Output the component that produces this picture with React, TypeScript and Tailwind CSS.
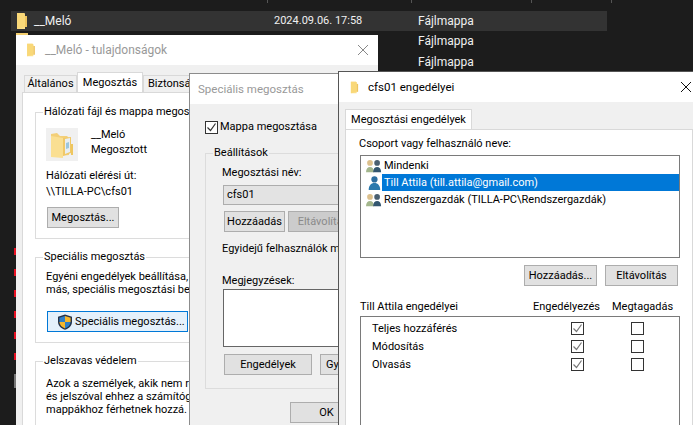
// App.tsx
import React from 'react';

const FolderFlat = ({ className }: { className?: string }) => (
  <svg viewBox="0 0 12 18" className={className}>
    <path d="M1 1h7l1 1v15H1z" fill="#fce08c" />
    <path d="M1 1h7l1 1v13l-8 2z" fill="#f9d878" />
    <path d="M9 4h2v11H9z" fill="#eec45e" />
  </svg>
);

const FolderShared = () => (
  <svg viewBox="0 0 32 33" className="h-[33px] w-[32px] bg-[#f0f0f0]">
    <path d="M5 6l6-1 3 3 7 0 2 2v17l-18 2z" fill="#f3cf78" />
    <path d="M5 8l12 2v20l-12-1z" fill="#fadf92" />
    <path d="M17 10l8-1v16l-8 3z" fill="#f0c868" />
    <path d="M19 11l5-1v14l-5 2z" fill="#e8eef2" />
    <path d="M20 15l3-1v6l-3 1z" fill="#9cc6de" />
    <path d="M25 16h2v11h-2z" fill="#eec65f" />
  </svg>
);

const Shield = () => (
  <svg viewBox="0 0 16 16" className="h-4 w-4 shrink-0">
    <path d="M8 0.5l7 2.2v5c0 4-3 6.800-7 8-4-1.200-7-4-7-8v-5z" fill="#26334a" />
    <path d="M8 2l5.600 1.700V8H8z" fill="#f6b72c" />
    <path d="M8 2v6H2.400V3.700z" fill="#2f7fc8" />
    <path d="M2.400 8H8v6.400C4.800 13.300 2.600 11 2.400 8z" fill="#f6b72c" />
    <path d="M8 8h5.600c-.2 3-2.400 5.300-5.600 6.400z" fill="#2f7fc8" />
  </svg>
);

const Person = ({ x, fill, shade }: { x: number; fill: string; shade: string }) => (
  <g transform={`translate(${x} 0)`}>
    <circle cx="4.500" cy="4.500" r="3.200" fill={fill} />
    <path d="M0 15c0-4 2-6 4.500-6s4.500 2 4.500 6z" fill={shade} />
  </g>
);

const Users = () => (
  <svg viewBox="0 0 18 16" className="h-4 w-4 shrink-0">
    <Person x={0} fill="#dcc08c" shade="#a3b68c" />
    <Person x={8} fill="#4a5f70" shade="#33566f" />
  </svg>
);

const User = () => (
  <svg viewBox="0 0 18 16" className="h-4 w-4 shrink-0">
    <circle cx="9.500" cy="4" r="3.500" fill="#2c6ea0" />
    <path d="M3 16c0-5 2.500-8 6.500-8s6.500 3 6.500 8z" fill="#2b79ad" />
  </svg>
);

const Btn = ({ className, children }: { className: string; children: React.ReactNode }) => (
  <div className={`flex h-[21px] shrink-0 items-center justify-center border border-[#adadad] bg-[#e1e1e1] ${className}`}>
    {children}
  </div>
);

const Group = ({ title, className, inner, children }: { title: string; className: string; inner: string; children: React.ReactNode }) => (
  <fieldset className={`border border-[#dcdcdc] ${className}`}>
    <legend className="ml-[7px] px-[1px] leading-[14px]">{title}</legend>
    <div className={inner}>{children}</div>
  </fieldset>
);

const Check = ({ on, dark }: { on?: boolean; dark?: boolean }) => (
  <div className="flex h-[13px] w-[13px] items-center justify-center border border-[#333] bg-white">
    {on && (
      <svg viewBox="0 0 11 11" className="h-[11px] w-[11px]">
        <path d="M1.500 5.500l3 3 5-7" fill="none" stroke={dark ? '#333' : '#777'} strokeWidth="1.200" />
      </svg>
    )}
  </div>
);

const permissions = ['Teljes hozzáférés', 'Módosítás', 'Olvasás'];

export default function App() {
  return (
    <div className="relative h-[425px] w-[693px] overflow-hidden whitespace-nowrap bg-[#1c1c1c] font-['Roboto',sans-serif] text-[11px] leading-[14px] text-black">
      {/* fájllista a háttérben */}
      <div className="flex h-[3px]">
        <div className="ml-[267px] w-[1px] bg-[#555]" />
        <div className="ml-[143px] w-[1px] bg-[#555]" />
        <div className="ml-[119px] w-[1px] bg-[#555]" />
        <div className="ml-[79px] w-[1px] bg-[#555]" />
      </div>
      <div className="ml-[11px] mt-[8px] flex h-[20px] w-[596px] items-center bg-[#333333] text-[#f0f0f0]">
        <FolderFlat className="ml-[5px] h-[18px] w-[12px]" />
        <span className="ml-[6px] w-[240px] text-[12px]">__Meló</span>
        <span className="w-[144px]">2024.09.06. 17:58</span>
        <span className="text-[12px]">Fájlmappa</span>
      </div>
      <div className="ml-[418px] mt-[3px] flex flex-col gap-[7px] text-[12px] text-[#f0f0f0]">
        <span>Fájlmappa</span>
        <span>Fájlmappa</span>
      </div>
      <div className="absolute left-[16px] top-[33px] h-[2px] w-[12px] bg-[#f4cf6e]" />

      {/* piros jelek a bal szélen */}
      <div className="absolute left-[14px] top-[248px] flex flex-col gap-[14px]">
        {[0, 1, 2, 3, 4, 5].map((i) => (
          <div key={i} className="h-[7px] w-[2px] bg-[#e81123]" />
        ))}
        <div className="h-[14px] w-[2px] bg-[#777]" />
      </div>

      {/* tulajdonságok ablak */}
      <div className="absolute left-[16px] top-[35px] flex h-[420px] w-[362px] flex-col bg-[#f0f0f0]">
        <div className="flex h-[30px] shrink-0 items-center bg-white text-[#999]">
          <FolderFlat className="ml-[10px] h-[14px] w-[10px]" />
          <span className="ml-[9px] text-[12px]">__Meló - tulajdonságok</span>
          <svg viewBox="0 0 10 10" className="ml-auto mr-[10px] h-[10px] w-[10px]">
            <path d="M0 0l10 10M10 0L0 10" stroke="#888" strokeWidth="1" />
          </svg>
        </div>
        <div className="ml-[8px] mt-[10px] flex h-[17px] items-end">
          <div className="flex h-[17px] w-[53px] items-center justify-center border border-b-0 border-[#d9d9d9]">Általános</div>
          <div className="-mt-[3px] flex h-[20px] w-[66px] items-center justify-center self-end border border-b-0 border-[#d9d9d9] bg-white">Megosztás</div>
          <div className="flex h-[17px] w-[60px] items-center border border-b-0 border-[#d9d9d9] pl-[4px]">Biztonság</div>
        </div>
        <div className="ml-[6px] flex w-[350px] flex-1 flex-col border border-[#d9d9d9] bg-white pl-[12px] pt-[12px]">
          <Group title="Hálózati fájl és mappa megoszt" className="h-[134px] w-[300px]" inner="pl-[10px]">
            <div className="mt-[9px] flex">
              <FolderShared />
              <div className="ml-[13px] flex flex-col gap-[1px]">
                <span>__Meló</span>
                <span>Megosztott</span>
              </div>
            </div>
            <div className="mt-[8px]">Hálózati elérési út:</div>
            <div className="mt-[2px]">\\TILLA-PC\cfs01</div>
            <Btn className="ml-[1px] mt-[8px] w-[72px]">Megosztás...</Btn>
          </Group>
          <Group title="Speciális megosztás" className="mt-[11px] h-[93px] w-[300px]" inner="pl-[10px]">
            <div className="mt-[6px]">Egyéni engedélyek beállítása,</div>
            <div className="-mt-[1px]">más, speciális megosztási beáll</div>
            <div className="ml-[1px] mt-[14px] flex h-[21px] w-[141px] items-center border border-[#0078d7] bg-[#e5f1fb] pl-[9px]">
              <Shield />
              <span className="ml-[2px]">Speciális megosztás...</span>
            </div>
          </Group>
          <Group title="Jelszavas védelem" className="mt-[11px] h-[80px] w-[300px]" inner="pl-[10px]">
            <div className="mt-[9px]">Azok a személyek, akik nem re</div>
            <div className="-mt-[1px]">és jelszóval ehhez a számítóge</div>
            <div className="-mt-[1px]">mappákhoz férhetnek hozzá.</div>
          </Group>
        </div>
      </div>

      {/* speciális megosztás ablak */}
      <div className="absolute left-[189px] top-[73px] flex h-[400px] w-[300px] flex-col border border-[#8c8c8c] bg-[#f0f0f0]">
        <div className="flex h-[30px] shrink-0 items-center bg-white pl-[8px] text-[11.500px] text-[#999]">Speciális megosztás</div>
        <div className="ml-[15px] mt-[16px] flex items-center">
          <Check on dark />
          <span className="ml-[2px]">Mappa megosztása</span>
        </div>
        <Group title="Beállítások" className="ml-[15px] mt-[12px] h-[243px] w-[290px]" inner="pl-[16px]">
          <div className="mt-[6px]">Megosztási név:</div>
          <div className="ml-[1px] mt-[5px] flex h-[20px] items-center border border-[#adadad] bg-[#e3e3e3] pl-[3px]">cfs01</div>
          <div className="ml-[2px] mt-[6px] flex gap-[3px]">
            <Btn className="w-[61px]">Hozzáadás</Btn>
            <Btn className="w-[70px] !bg-[#cccccc] text-[#8a8a8a]">Eltávolítás</Btn>
          </div>
          <div className="mt-[10px]">Egyidejű felhasználók ma</div>
          <div className="mt-[18px]">Megjegyzések:</div>
          <div className="ml-[1px] mt-[1px] h-[58px] border border-[#666] bg-white" />
          <div className="ml-[2px] mt-[7px] flex gap-[8px]">
            <Btn className="w-[88px]">Engedélyek</Btn>
            <Btn className="w-[88px] justify-start pl-[5px]">Gy</Btn>
          </div>
        </Group>
        <Btn className="ml-[100px] mt-[13px] w-[73px]">OK</Btn>
      </div>

      {/* engedélyek ablak */}
      <div className="absolute left-[338px] top-[71px] flex h-[400px] w-[356px] flex-col border-l border-t border-[#555] bg-[#f0f0f0]">
        <div className="flex h-[30px] shrink-0 items-center bg-white">
          <FolderFlat className="ml-[11px] h-[13px] w-[9px]" />
          <span className="ml-[9px] text-[11.500px]">cfs01 engedélyei</span>
          <svg viewBox="0 0 10 10" className="ml-auto mr-[3px] h-[10px] w-[10px]">
            <path d="M0 0l10 10M10 0L0 10" stroke="#111" strokeWidth="1" />
          </svg>
        </div>
        <div className="ml-[6px] mt-[7px] flex h-[20px] w-[127px] items-center justify-center border border-b-0 border-[#d9d9d9] bg-white">Megosztási engedélyek</div>
        <div className="ml-[6px] flex w-[348px] flex-1 flex-col border border-[#d9d9d9] bg-white pl-[14px] pr-[12px]">
          <div className="-ml-[1px] mt-[7px]">Csoport vagy felhasználó neve:</div>
          <div className="mt-[4px] flex h-[103px] flex-col border border-[#7a7a7a] pt-[1px]">
            <div className="flex h-[17px] items-center pl-[5px]">
              <Users />
              <span className="ml-[2px]">Mindenki</span>
            </div>
            <div className="flex h-[17px] items-center pl-[5px]">
              <User />
              <span className="flex h-[17px] flex-1 items-center bg-[#0078d7] pl-[2px] text-white">Till Attila (till.attila@gmail.com)</span>
            </div>
            <div className="flex h-[17px] items-center pl-[5px]">
              <Users />
              <span className="ml-[2px]">Rendszergazdák (TILLA-PC\Rendszergazdák)</span>
            </div>
          </div>
          <div className="mt-[7px] flex justify-end gap-[8px] pr-[2px]">
            <Btn className="w-[73px]">Hozzáadás...</Btn>
            <Btn className="w-[73px]">Eltávolítás</Btn>
          </div>
          <div className="mt-[14px] flex">
            <span className="w-[173px]">Till Attila engedélyei</span>
            <span className="w-[79px]">Engedélyezés</span>
            <span>Megtagadás</span>
          </div>
          <div className="mt-[2px] flex flex-1 flex-col gap-[5px] border border-[#7a7a7a] pl-[11px] pt-[5px]">
            {permissions.map((p) => (
              <div key={p} className="flex h-[13px] items-center">
                <span className="w-[199px]">{p}</span>
                <Check on />
                <div className="ml-[47px]">
                  <Check />
                </div>
              </div>
            ))}
          </div>
        </div>
      </div>
    </div>
  );
}
